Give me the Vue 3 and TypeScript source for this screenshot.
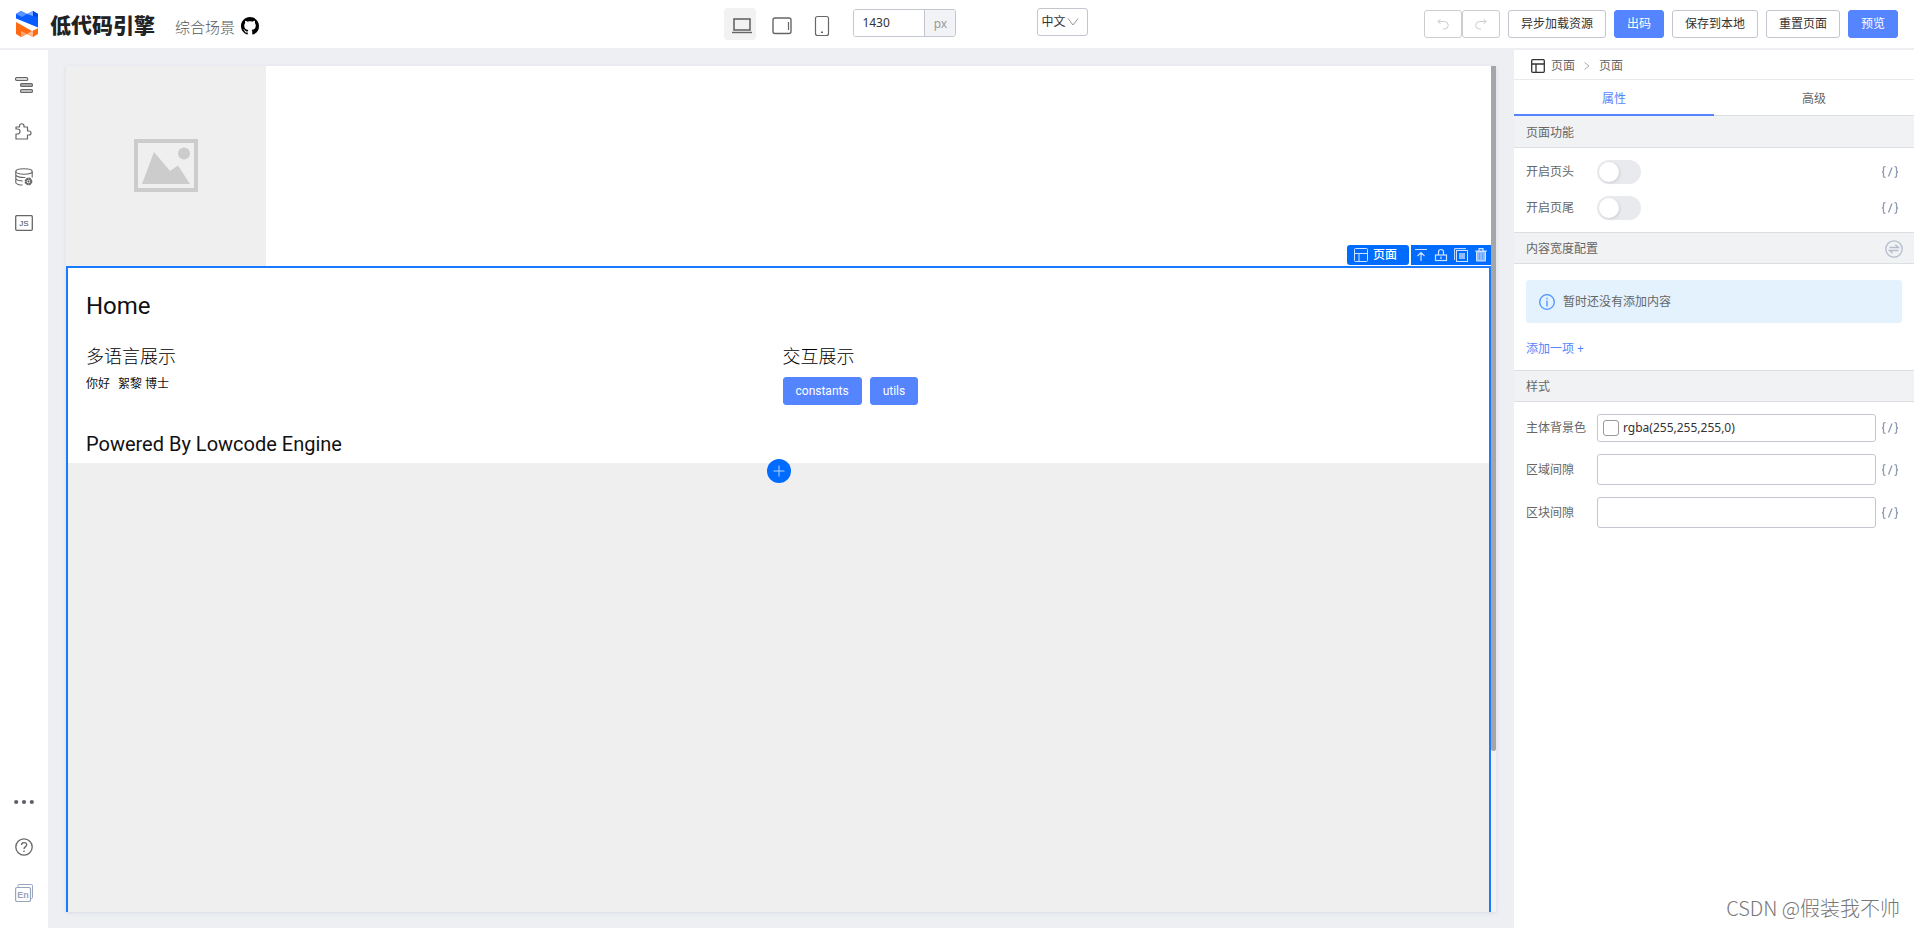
<script setup lang="ts">
import { ref } from 'vue'

const device = ref('desktop')
const devices = [
  { key: 'desktop', label: '桌面' },
  { key: 'tablet', label: '平板' },
  { key: 'phone', label: '手机' },
]
const canvasWidth = ref('1430')
const locale = ref('zh')
const tab = ref('props')
const tabs = [
  { key: 'props', label: '属性' },
  { key: 'advanced', label: '高级' },
]
const actions = [
  { label: '异步加载资源', primary: false },
  { label: '出码', primary: true },
  { label: '保存到本地', primary: false },
  { label: '重置页面', primary: false },
  { label: '预览', primary: true },
]
const switches = ref([
  { id: 'page-header', label: '开启页头', on: false },
  { id: 'page-footer', label: '开启页尾', on: false },
])
const background = ref('rgba(255,255,255,0)')
const gaps = ref([
  { id: 'region-gap', label: '区域间隙', value: '' },
  { id: 'block-gap', label: '区块间隙', value: '' },
])
</script>

<template>
  <div class="shell">
    <header class="topbar">
      <div class="lead">
        <svg class="logo" width="22" height="26" viewBox="0 0 22 26">
          <path d="M0 3 5 0l6 3 6-3 5 3v14L0 8z" fill="#0a5cff" />
          <path d="M5 0l6 3-5 3-6-3z" fill="#5b93ff" />
          <path d="M17 0v5l-6-2z" fill="#7eabff" />
          <path d="M17 0l5 3v3l-5-1z" fill="#0046e6" />
          <path d="M0 10l22 7v6l-5 3-6-3-6 3-5-3z" fill="#ff6a13" />
          <path d="M5 20l6 3-6 3z" fill="#ffa46b" />
          <path d="M11 23l6-4v7z" fill="#ffb98d" />
          <path d="M0 7.500L22 16.500v.8L16 20 0 11z" fill="#fff" />
        </svg>
        <span class="brand-name">低代码引擎</span>
        <span class="scene">综合场景</span>
        <a class="github" href="#" aria-label="GitHub">
          <svg width="18" height="18" viewBox="0 0 16 16">
            <path fill="#000" d="M8 0C3.58 0 0 3.58 0 8c0 3.54 2.29 6.53 5.47 7.59.4.07.55-.17.55-.38 0-.19-.01-.82-.01-1.49-2.01.37-2.53-.49-2.69-.94-.09-.23-.48-.94-.82-1.13-.28-.15-.68-.52-.01-.53.63-.01 1.08.58 1.23.82.72 1.21 1.87.87 2.33.66.07-.52.28-.87.51-1.07-1.78-.2-3.64-.89-3.64-3.95 0-.87.31-1.59.82-2.15-.08-.2-.36-1.02.08-2.12 0 0 .67-.21 2.2.82.64-.18 1.32-.27 2-.27s1.36.09 2 .27c1.53-1.04 2.2-.82 2.2-.82.44 1.1.16 1.92.08 2.12.51.56.82 1.27.82 2.15 0 3.07-1.87 3.75-3.65 3.95.29.25.54.73.54 1.48 0 1.07-.01 1.93-.01 2.2 0 .21.15.46.55.38A8.01 8.01 0 0 0 16 8c0-4.42-3.58-8-8-8z" />
          </svg>
        </a>
      </div>

      <div class="viewport">
        <button
          v-for="d in devices"
          :key="d.key"
          type="button"
          class="device"
          :class="{ active: device === d.key }"
          :aria-label="d.label"
          @click="device = d.key"
        >
          <svg width="32" height="32" viewBox="0 0 32 32" fill="none" stroke="#666">
            <template v-if="d.key === 'desktop'">
              <rect x="10" y="11" width="16" height="11" stroke-width="1.6" />
              <path d="M8 24.5h20" stroke-width="1.4" />
            </template>
            <template v-else-if="d.key === 'tablet'">
              <rect x="9" y="10" width="18" height="15.5" rx="2" stroke-width="1.4" />
              <path d="M24.5 14v8" stroke-width="1.2" />
            </template>
            <template v-else>
              <rect x="11.5" y="8.5" width="13" height="19" rx="2" stroke-width="1.2" />
              <path d="M17 24.2h2" stroke-width="1.6" />
            </template>
          </svg>
        </button>
        <div class="size">
          <input v-model="canvasWidth" type="text" aria-label="画布宽度" />
          <span>px</span>
        </div>
        <div class="locale">
          <select v-model="locale" aria-label="语言">
            <option value="zh">中文</option>
            <option value="en">English</option>
          </select>
          <svg width="12" height="12" viewBox="0 0 12 12" fill="none" stroke="#999">
            <path d="M1 2.5l5 6.5 5-6.5" />
          </svg>
        </div>
      </div>

      <div class="actions">
        <div class="history">
          <button type="button" class="btn" aria-label="撤销" disabled>
            <svg width="12" height="12" viewBox="0 0 12 12" fill="none" stroke="#ccc">
              <path d="M3.5 1L1 3.5 3.5 6M1 3.5h6.5a3.5 3.5 0 0 1 0 7.5H6" />
            </svg>
          </button>
          <button type="button" class="btn" aria-label="重做" disabled>
            <svg width="12" height="12" viewBox="0 0 12 12" fill="none" stroke="#ccc">
              <path d="M8.5 1L11 3.5 8.5 6M11 3.5H4.500a3.5 3.5 0 0 0 0 7.500H6" />
            </svg>
          </button>
        </div>
        <button
          v-for="a in actions"
          :key="a.label"
          type="button"
          class="btn"
          :class="{ primary: a.primary }"
        >{{ a.label }}</button>
      </div>
    </header>

    <div class="workspace">
      <nav class="rail">
        <div class="rail-group">
          <button type="button" aria-label="大纲树">
            <svg width="18" height="18" viewBox="0 0 18 18" fill="#ddd" stroke="#666" stroke-width="1.2">
              <rect x=".6" y="1.6" width="12" height="2.8" rx="1" fill="#fff" />
              <rect x="5.6" y="7.6" width="11.8" height="2.8" rx="1" fill="#bbb" />
              <rect x="5.6" y="13.6" width="11.8" height="2.8" rx="1" />
            </svg>
          </button>
          <button type="button" aria-label="组件库">
            <svg width="18" height="18" viewBox="0 0 18 18" fill="none" stroke="#666" stroke-width="1.2" stroke-linejoin="round">
              <path d="M1 17v-5h1.500a2 2 0 0 0 0-5H1V5h3.500V4a2 2 0 0 1 4.500 0v1h3.500v4H14a2 2 0 0 1 0 4h-1.500v4z" />
            </svg>
          </button>
          <button type="button" aria-label="数据源">
            <svg width="18" height="18" viewBox="0 0 18 18" fill="none" stroke="#666" stroke-width="1.1">
              <ellipse cx="9" cy="3.5" rx="8.2" ry="2.7" />
              <path d="M.8 3.5v11.5M17.2 3.5v6M.8 7c1 2 6 2.800 9.500 2.500M.8 10.500c1 1.800 4 2.500 7 2.500M.8 14.700c1 1.500 4 2.300 6.700 2.300" />
              <circle cx="13.5" cy="13.5" r="3" stroke-width="1.8" stroke-dasharray="1.8 .55" />
              <circle cx="13.5" cy="13.5" r="2.5" />
              <circle cx="13.5" cy="13.5" r=".6" />
            </svg>
          </button>
          <button type="button" aria-label="源码">
            <svg width="18" height="18" viewBox="0 0 18 18" fill="none" stroke="#666">
              <rect x=".7" y="1.7" width="16.6" height="14.6" rx="1" stroke-width="1.3" />
              <text x="9" y="11.8" text-anchor="middle" font-size="8" fill="#444" stroke="none">JS</text>
            </svg>
          </button>
        </div>
        <div class="rail-group">
          <button type="button" aria-label="更多">
            <svg width="20" height="18" viewBox="0 0 20 18" fill="#5f6066">
              <circle cx="2.2" cy="10" r="2.1" /><circle cx="10" cy="10" r="2.1" /><circle cx="17.800" cy="10" r="2.1" />
            </svg>
          </button>
          <button type="button" aria-label="帮助">
            <svg width="18" height="18" viewBox="0 0 18 18" fill="none" stroke="#666" stroke-width="1.3">
              <circle cx="9" cy="9" r="8.2" />
              <path d="M6.500 7c0-3.200 5.200-3.200 5.200-.3C11.700 8.600 9 8.700 9 11M9 12.600V14" />
            </svg>
          </button>
          <button type="button" aria-label="切换语言">
            <svg width="18" height="18" viewBox="0 0 18 18" fill="none" stroke="#99a4bd">
              <path d="M3 3.500V1.500a1 1 0 0 1 1-1H16.500a1 1 0 0 1 1 1V13.500a1 1 0 0 1-1 1h-1" />
              <rect x=".6" y="3.5" width="14.9" height="14" rx="1.5" stroke-width="1.2" />
              <text x="8" y="14" text-anchor="middle" font-size="9" font-weight="700" fill="#99a4bd" stroke="none">En</text>
            </svg>
          </button>
        </div>
      </nav>

      <main class="stage">
        <div class="canvas">
          <div class="page">
            <div class="placeholder">
              <svg width="64" height="54" viewBox="0 0 64 54">
                <rect x="2" y="2" width="60" height="49" fill="none" stroke="#ccc" stroke-width="4" />
                <path d="M8 45L20 13l16 19 8-5.500L56 45z" fill="#ccc" />
                <circle cx="50" cy="14.500" r="6" fill="#ccc" />
              </svg>
            </div>
            <section class="selected">
              <div class="toolbar">
                <span class="tag">
                  <svg width="14" height="14" viewBox="0 0 14 14" fill="none" stroke="#cfe2ff">
                    <rect x=".5" y=".5" width="13" height="13" rx="1" /><path d="M.5 5.500h13M5 5.500v8" />
                  </svg>
                  页面
                </span>
                <span class="tools">
                  <button type="button" aria-label="选择父级">
                    <svg width="14" height="14" viewBox="0 0 14 14" fill="none" stroke="#cfe2ff" stroke-width="1.2">
                      <path d="M1 1.500h12M7 13V4.500M3.500 8L7 4.500 10.500 8" />
                    </svg>
                  </button>
                  <button type="button" aria-label="锁定">
                    <svg width="14" height="14" viewBox="0 0 14 14" fill="none" stroke="#cfe2ff" stroke-width="1.2">
                      <rect x="1.5" y="7" width="11" height="5.5" /><path d="M4.500 7V4a2.500 2.500 0 0 1 5 0v3M7 8.500V11" />
                    </svg>
                  </button>
                  <button type="button" aria-label="复制">
                    <svg width="14" height="14" viewBox="0 0 14 14" fill="none" stroke="#cfe2ff">
                      <path d="M.6 12V.6H12" /><rect x="2.5" y="2.5" width="11" height="11" /><rect x="5" y="5" width="6" height="6" fill="#8fbcff" stroke="none" />
                    </svg>
                  </button>
                  <button type="button" aria-label="删除">
                    <svg width="14" height="14" viewBox="0 0 14 14" fill="none" stroke="#cfe2ff">
                      <path d="M1 3h12M5 2.500V.6h4v1.900" stroke-width="1.2" /><path d="M2.500 3.500h9v9.500h-9z" fill="#8fbcff" /><path d="M5.500 5v6.500M8.500 5v6.500" stroke="#5fa2ff" />
                    </svg>
                  </button>
                </span>
              </div>
              <div class="content">
                <h1>Home</h1>
                <div class="columns">
                  <div>
                    <h2>多语言展示</h2>
                    <p class="greeting"><span>你好</span><span>絮黎 博士</span></p>
                  </div>
                  <div>
                    <h2>交互展示</h2>
                    <div class="demo">
                      <button type="button" class="btn primary">constants</button>
                      <button type="button" class="btn primary">utils</button>
                    </div>
                  </div>
                </div>
                <p class="powered">Powered By Lowcode Engine</p>
                <div class="adder">
                  <button type="button" aria-label="添加区域">
                    <svg width="12" height="12" viewBox="0 0 12 12" stroke="#b3d2ff"><path d="M6 .5v11M.5 6h11" /></svg>
                  </button>
                </div>
              </div>
            </section>
          </div>
          <div class="scroll"><div class="thumb"></div></div>
        </div>
      </main>

      <aside class="panel">
        <div class="crumbs">
          <svg width="14" height="14" viewBox="0 0 14 14" fill="none" stroke="#333" stroke-width="1.3">
            <rect x=".7" y=".7" width="12.6" height="12.6" rx="1" /><path d="M.7 5h12.600M5 5v8.300" />
          </svg>
          <span>页面</span>
          <svg class="sep" width="6" height="8" viewBox="0 0 6 8" fill="none" stroke="#aaa"><path d="M.5 .5L5 4 .5 7.500" /></svg>
          <span>页面</span>
        </div>
        <div class="tabs" role="tablist">
          <button
            v-for="t in tabs"
            :key="t.key"
            type="button"
            role="tab"
            :aria-selected="tab === t.key"
            :class="{ active: tab === t.key }"
            @click="tab = t.key"
          >{{ t.label }}</button>
        </div>

        <h3 class="first">页面功能</h3>
        <div class="fields">
          <div v-for="s in switches" :key="s.id" class="field">
            <label :for="s.id">{{ s.label }}</label>
            <div class="control"><input :id="s.id" v-model="s.on" type="checkbox" class="switch" /></div>
            <button type="button" class="bind" aria-label="绑定变量">
              <svg width="18" height="12" viewBox="0 0 18 12" fill="none" stroke="#8f9bb3" stroke-width="1.3">
                <path d="M4.500 .7H3.800Q2.500 .7 2.500 2v2.300Q2.500 6 1 6q1.500 0 1.500 1.700V10q0 1.300 1.300 1.300h.7M13.500 .7h.7q1.300 0 1.300 1.300v2.300Q15.500 6 17 6q-1.500 0-1.500 1.700V10q0 1.300-1.300 1.300h-.7M11 1.500L7.500 10.500" />
              </svg>
            </button>
          </div>
        </div>

        <h3>
          内容宽度配置
          <button type="button" class="swap" aria-label="切换">
            <svg width="18" height="18" viewBox="0 0 18 18" fill="none" stroke="#b4bccd" stroke-width="1.3">
              <circle cx="9" cy="9" r="8.2" /><path d="M4.500 7.500h9L10.300 4.800M13.500 10.500h-9l3.200 2.700" />
            </svg>
          </button>
        </h3>
        <div class="list">
          <div class="notice">
            <svg width="16" height="16" viewBox="0 0 16 16" fill="none" stroke="#4a90ff" stroke-width="1.3">
              <circle cx="8" cy="8" r="7.3" /><path d="M8 3.700v1.500M8 6.500v6" />
            </svg>
            暂时还没有添加内容
          </div>
          <button type="button" class="add">添加一项 +</button>
        </div>

        <h3>样式</h3>
        <div class="fields">
          <div class="field">
            <label for="bg">主体背景色</label>
            <div class="control color">
              <button type="button" class="swatch" aria-label="选择颜色"></button>
              <input id="bg" v-model="background" type="text" />
            </div>
            <button type="button" class="bind" aria-label="绑定变量">
              <svg width="18" height="12" viewBox="0 0 18 12" fill="none" stroke="#8f9bb3" stroke-width="1.3">
                <path d="M4.500 .7H3.800Q2.500 .7 2.500 2v2.300Q2.500 6 1 6q1.500 0 1.500 1.700V10q0 1.300 1.300 1.300h.7M13.500 .7h.7q1.300 0 1.300 1.300v2.300Q15.500 6 17 6q-1.500 0-1.500 1.700V10q0 1.300-1.300 1.300h-.7M11 1.500L7.500 10.500" />
              </svg>
            </button>
          </div>
          <div v-for="g in gaps" :key="g.id" class="field">
            <label :for="g.id">{{ g.label }}</label>
            <input :id="g.id" v-model="g.value" type="text" class="control box" />
            <button type="button" class="bind" aria-label="绑定变量">
              <svg width="18" height="12" viewBox="0 0 18 12" fill="none" stroke="#8f9bb3" stroke-width="1.3">
                <path d="M4.500 .7H3.800Q2.500 .7 2.500 2v2.300Q2.500 6 1 6q1.500 0 1.500 1.700V10q0 1.300 1.300 1.300h.7M13.500 .7h.7q1.300 0 1.300 1.300v2.300Q15.500 6 17 6q-1.500 0-1.500 1.700V10q0 1.300-1.300 1.300h-.7M11 1.500L7.500 10.500" />
              </svg>
            </button>
          </div>
        </div>
      </aside>
    </div>
    <div class="watermark">CSDN @假装我不帅</div>
  </div>
</template>

<style scoped>
.shell {
  position: relative;
  display: flex;
  flex-direction: column;
  min-height: 100vh;
  background: #edeff3;
  color: #333;
  font-family: "Noto Sans", "Noto Sans CJK SC", sans-serif;
  font-size: 12px;
  line-height: 18px;
}
.shell * { box-sizing: border-box; }
svg { display: block; flex: none; }
button {
  padding: 0;
  border: 0;
  background: none;
  color: inherit;
  font: inherit;
  cursor: pointer;
}
input, select { font: inherit; color: inherit; outline: none; }
h1, h2, h3, p { margin: 0; font-weight: 400; }

.topbar {
  display: grid;
  grid-template-columns: 7fr auto 8fr;
  align-items: center;
  height: 48px;
  padding: 0 16px;
  background: #fff;
}
.lead { display: flex; align-items: center; }
.brand-name {
  margin-left: 12px;
  color: #222;
  font-family: "Noto Sans CJK SC", sans-serif;
  font-size: 21px;
  font-weight: 900;
  line-height: 26px;
}
.scene {
  margin: 6px 6px 0 20px;
  color: #555;
  font-size: 15px;
  font-weight: 300;
  line-height: 20px;
}
.github { margin-top: 4px; }
.viewport { display: flex; align-items: flex-start; gap: 8px; }
.device { width: 32px; height: 32px; border-radius: 4px; }
.device.active { background: #f2f2f2; }
.size {
  display: flex;
  height: 28px;
  margin: 1px 0 0 9px;
  border: 1px solid #c4c6cf;
  border-radius: 3px;
  overflow: hidden;
}
.size input { width: 70px; padding: 0 8px; border: 0; }
.size span {
  width: 31px;
  border-left: 1px solid #c4c6cf;
  background: #f2f3f7;
  color: #999;
  line-height: 28px;
  text-align: center;
}
.locale { position: relative; margin-left: 73px; }
.locale select {
  width: 51px;
  height: 28px;
  padding: 0 3px;
  border: 1px solid #c4c6cf;
  border-radius: 3px;
  background: #fff;
  appearance: none;
}
.locale svg { position: absolute; top: 8px; right: 9px; pointer-events: none; }
.actions { display: flex; justify-content: flex-end; gap: 8px; }
.history { display: flex; }
.history .btn { display: grid; place-items: center; width: 38px; padding: 0; border-color: #ccc; }
.btn {
  height: 28px;
  padding: 0 12px;
  border: 1px solid #c4c6cf;
  border-radius: 3px;
  background: #fff;
  white-space: nowrap;
}
.btn.primary { border-color: #5584ff; background: #5584ff; color: #fff; }

.workspace { display: flex; flex: 1; margin-top: 2px; }
.rail {
  display: flex;
  flex-direction: column;
  justify-content: space-between;
  width: 48px;
  padding: 12px 0;
  background: #fff;
}
.rail-group { display: flex; flex-direction: column; }
.rail button { display: grid; place-items: center; height: 46px; }
.rail text { font-family: "Liberation Sans", sans-serif; }

.stage { display: flex; flex: 1; min-width: 0; padding: 16px 18px; }
.canvas { display: flex; flex: 1; min-width: 0; box-shadow: 0 1px 4px rgba(31, 50, 88, 0.1); }
.page { display: flex; flex: 1; flex-direction: column; min-width: 0; background: #fff; }
.placeholder {
  display: grid;
  place-items: center;
  width: 200px;
  height: 200px;
  background: #efefef;
}
.selected {
  position: relative;
  flex: 1;
  border: 2px solid #197aff;
  border-bottom: 0;
  background: #efefef;
}
.toolbar { position: absolute; top: -23px; right: -2px; display: flex; gap: 2px; }
.tag {
  display: flex;
  align-items: center;
  gap: 5px;
  height: 20px;
  padding: 0 12px 0 7px;
  border-radius: 3px;
  background: #006cff;
  color: #fff;
  font-weight: 500;
}
.tools { display: flex; background: #006cff; }
.tools button { display: grid; place-items: center; width: 20px; height: 20px; }
.content {
  position: relative;
  padding: 22px 18px 5px;
  background: #fff;
  color: #111;
  font-family: Roboto, "Noto Sans CJK SC", sans-serif;
}
h1 { font-size: 24px; line-height: 32px; }
.columns { display: grid; grid-template-columns: 1fr 1fr; gap: 8px; margin-top: 22px; }
h2 { color: #000; font-size: 18px; font-weight: 300; line-height: 26px; }
.greeting { display: flex; gap: 8px; margin-top: 5px; }
.demo { display: flex; gap: 8px; margin-top: 7px; }
.powered { margin-top: 25px; font-size: 20px; line-height: 28px; }
.adder { position: absolute; right: 0; bottom: -20px; left: 0; display: flex; justify-content: center; }
.adder button {
  display: grid;
  place-items: center;
  width: 24px;
  height: 24px;
  border-radius: 50%;
  background: #006cff;
}
.scroll { width: 5px; background: #f0f1f5; }
.thumb { height: 81%; border-radius: 0 0 3px 3px; background: #a5a6aa; }

.panel { width: 400px; background: #fff; color: #666; }
.crumbs {
  display: flex;
  align-items: center;
  gap: 6px;
  height: 30px;
  padding: 2px 0 0 17px;
  border-bottom: 1px solid #e8eaee;
}
.crumbs .sep { margin: 0 3px; }
.tabs { display: flex; height: 36px; border-bottom: 1px solid #dcdee3; }
.tabs button { flex: 1; height: 36px; padding-top: 4px; border-bottom: 2px solid transparent; }
.tabs .active { border-color: #5584ff; color: #5584ff; }
h3 {
  display: flex;
  align-items: center;
  justify-content: space-between;
  height: 32px;
  padding: 2px 11px 0 12px;
  border: solid #dcdee3;
  border-width: 1px 0;
  background: #f1f2f4;
  font-size: 12px;
}
h3.first { border-top: 0; }
.fields { display: flex; flex-direction: column; gap: 12px; padding: 12px; }
.field { display: flex; align-items: center; gap: 2px; }
.field label { width: 69px; }
.control { flex: 1; min-width: 0; }
.bind { display: grid; place-items: center; width: 24px; height: 24px; }
.switch {
  display: block;
  width: 44px;
  height: 24px;
  margin: 0;
  padding: 2px;
  border-radius: 12px;
  background: #e9eaee;
  appearance: none;
}
.switch::before {
  display: block;
  width: 20px;
  height: 20px;
  border-radius: 50%;
  background: #fff;
  box-shadow: 1px 1px 3px rgba(0, 0, 0, 0.12);
  content: "";
}
.switch:checked { background: #5584ff; }
.switch:checked::before { margin-left: 20px; }
.list { height: 106px; padding: 16px 12px; }
.notice {
  display: flex;
  align-items: center;
  gap: 8px;
  height: 43px;
  padding-left: 13px;
  border-radius: 3px;
  background: #e3f2fd;
}
.add { display: block; margin-top: 17px; color: #5584ff; }
.color, .box {
  border: 1px solid #c4c6cf;
  border-radius: 3px;
  background: #fff;
}
.color { display: flex; align-items: center; gap: 4px; height: 28px; padding: 0 5px; color: #333; }
.color input { flex: 1; min-width: 0; padding: 0; border: 0; }
.swatch { width: 16px; height: 16px; border: 1px solid #999; border-radius: 3px; }
.box { height: 31px; padding: 0 8px; }
.watermark {
  position: absolute;
  right: 14px;
  bottom: 6px;
  color: #777;
  font-family: "Noto Sans CJK SC", sans-serif;
  font-size: 20px;
  font-weight: 300;
  line-height: 28px;
}
</style>

<style>
body { margin: 0; }
</style>
